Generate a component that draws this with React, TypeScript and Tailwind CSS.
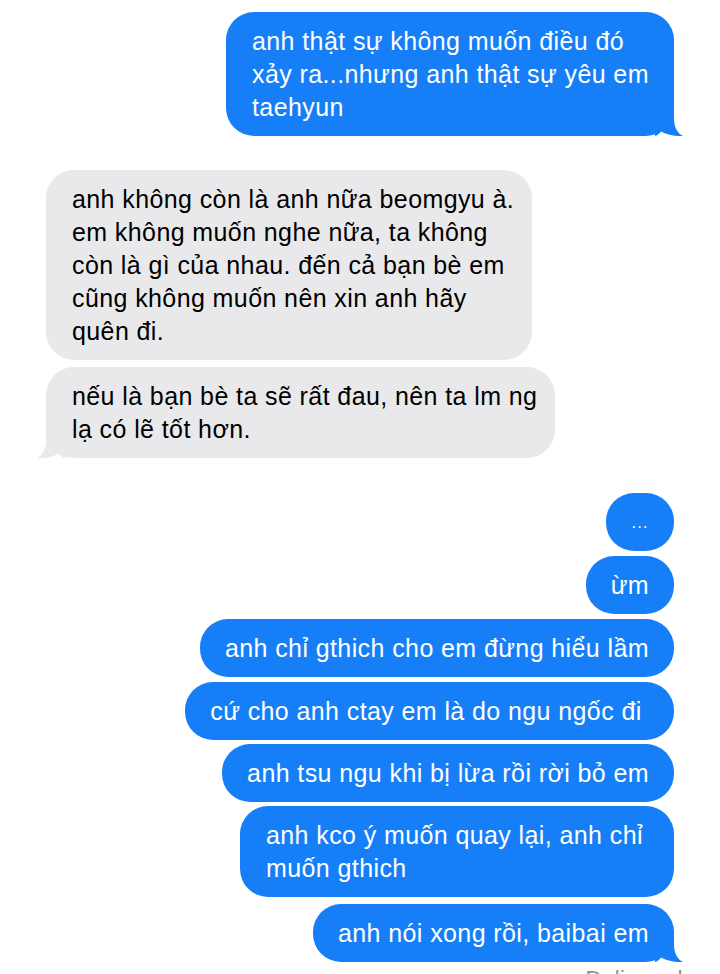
import React from "react";

type Msg = {
  from: "me" | "them";
  lines: string[];
  width?: string;
  tail?: boolean;
  gap: string;
};

const MESSAGES: Msg[] = [
  {
    from: "me",
    lines: ["anh thật sự không muốn điều đó", "xảy ra...nhưng anh thật sự yêu em", "taehyun"],
    width: "w-[448px]",
    tail: true,
    gap: "mt-0",
  },
  {
    from: "them",
    lines: [
      "anh không còn là anh nữa beomgyu à.",
      "em không muốn nghe nữa, ta không",
      "còn là gì của nhau. đến cả bạn bè em",
      "cũng không muốn nên xin anh hãy",
      "quên đi.",
    ],
    width: "w-[486px]",
    gap: "mt-[34px]",
  },
  {
    from: "them",
    lines: ["nếu là bạn bè ta sẽ rất đau, nên ta lm ng", "lạ có lẽ tốt hơn."],
    width: "w-[509px]",
    tail: true,
    gap: "mt-[7px]",
  },
  { from: "me", lines: ["..."], gap: "mt-[35px]" },
  { from: "me", lines: ["ừm"], gap: "mt-[5px]" },
  { from: "me", lines: ["anh chỉ gthich cho em đừng hiểu lầm"], gap: "mt-[5px]" },
  { from: "me", lines: ["cứ cho anh ctay em là do ngu ngốc đi "], gap: "mt-[5px]" },
  { from: "me", lines: ["anh tsu ngu khi bị lừa rồi rời bỏ em"], gap: "mt-[4px]" },
  {
    from: "me",
    lines: ["anh kco ý muốn quay lại, anh chỉ", "muốn gthich"],
    width: "w-[434px]",
    gap: "mt-[4px]",
  },
  { from: "me", lines: ["anh nói xong rồi, baibai em"], tail: true, gap: "mt-[7px]" },
];

function Tail({ side, color }: { side: "left" | "right"; color: string }) {
  return (
    <svg
      width="28"
      height="26"
      viewBox="0 0 28 26"
      className={`absolute bottom-0 ${side === "right" ? "right-[-9px]" : "left-[-9px] -scale-x-100"}`}
    >
      <path
        d="M0 0 L19 0 L19 8 C19 17 22 23 28 26 C21 26.5 12 25 6 21.5 C4 24 2 25.5 0 26 Z"
        fill={color}
      />
    </svg>
  );
}

function Bubble({ msg }: { msg: Msg }) {
  const mine = msg.from === "me";
  const single = msg.lines.length === 1;
  const dots = msg.lines[0] === "...";
  return (
    <div className={`flex ${mine ? "justify-end" : "justify-start"} ${msg.gap}`}>
      <div
        className={`relative rounded-[28px] py-[12.5px] text-[25px] leading-[33px] tracking-[0.4px] ${
          mine ? "bg-[#167ff8] text-white" : "bg-[#e9e9eb] text-black"
        } ${msg.width ?? ""} ${dots ? "px-[20px] w-[68px] text-center" : single ? "px-[25px]" : "px-[26px]"}`}
      >
        {msg.lines.map((l, i) => (
          <div key={i} className={`whitespace-pre ${dots ? "text-[17px] tracking-[1px]" : ""}`}>
            {l}
          </div>
        ))}
        {msg.tail && <Tail side={mine ? "right" : "left"} color={mine ? "#167ff8" : "#e9e9eb"} />}
      </div>
    </div>
  );
}

export default function App() {
  return (
    <div
      className="w-[720px] h-[974px] overflow-hidden bg-white px-[46px] pt-[12px]"
      style={{ fontFamily: '"Liberation Sans", Arial, sans-serif' }}
    >
      <div className="flex flex-col">
        {MESSAGES.map((m, i) => (
          <Bubble key={i} msg={m} />
        ))}
        <div className="mt-[4px] mr-[-9px] text-right text-[22px] leading-[26px] tracking-[0.5px] text-[#8e8e93]">
          Delivered
        </div>
      </div>
    </div>
  );
}
